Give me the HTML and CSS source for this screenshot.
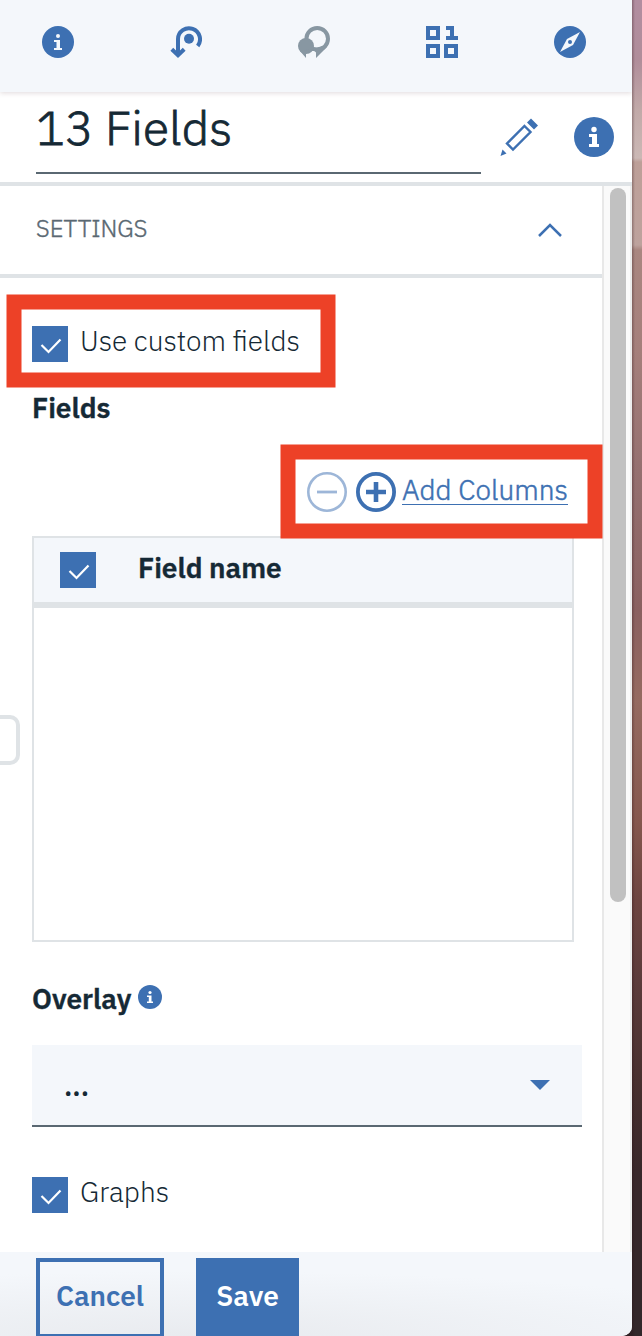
FILE: index.html
```
<!DOCTYPE html>
<html lang="en">
<head>
<meta charset="utf-8">
<title>13 Fields</title>
<link rel="stylesheet" href="styles.css">
</head>
<body>
<div class="desktop">
<main class="panel">
  <nav class="toolbar">
    <svg class="tool" viewBox="0 0 32 32"><circle cx="16" cy="16" r="16"/><circle class="paper" cx="16" cy="10" r="2"/><path class="paper" d="M12 14h6v8h2v2h-8v-2h2.500v-6H12z"/></svg>
    <svg class="tool" viewBox="0 0 32 32"><path class="stroke" d="M8 28V13a11 11 0 1 1 19.700 7" stroke-width="4"/><path class="stroke" d="M1.800 23.200L8 29.200l6.200-6" stroke-width="4"/><circle cx="19" cy="12.800" r="5"/></svg>
    <svg class="tool muted" viewBox="0 0 32 32"><path class="ring" d="M19.200 2a10.800 10.800 0 1 1 0 21.600 10.800 10.800 0 0 1 0-21.600z"/><circle cx="8" cy="20" r="8"/><path d="M2 25l6 7v-4.200l3.500-2.800h5l1.500 1.500V32l11-11-5-1-9 3z"/></svg>
    <svg class="tool" viewBox="0 0 32 32"><path fill-rule="evenodd" d="M0 0h14v14H0zM4 4v6h6V4zM0 18h14v14H0zM4 22v6h6v-6zM18 18h14v14H18zM22 22v6h6v-6zM20 0h8v10h4v4H20v-4h4V4h-4z"/></svg>
    <svg class="tool" viewBox="0 0 32 32"><circle cx="16" cy="16" r="16"/><path class="paper" d="M26 6l-7 13-13 7 7-13z"/><circle cx="16" cy="16" r="2"/></svg>
  </nav>
  <header class="heading">
    <h1 class="title">13 Fields</h1>
    <svg class="pencil" viewBox="0 0 38 38"><path class="stroke" d="M24.500 8l6 6-17.500 17.500-6-6z" stroke-width="2.400"/><path d="M31 .5l7 7-4 4-7-7zM2.500 31.500l4 4L.5 38z"/></svg>
    <svg class="title-info" viewBox="0 0 40 40"><circle cx="20" cy="20" r="20"/><circle class="paper" cx="20" cy="12.500" r="2.700"/><path class="paper" d="M15 17h8v10h2v3H15v-3h3v-7h-3z"/></svg>
  </header>
  <div class="body">
    <div class="content">
      <div class="section-head">
        <span class="section-name">SETTINGS</span>
        <svg class="chevron" viewBox="0 0 24 14"><path class="stroke" d="M1 13L12 2l11 11" stroke-width="2.500"/></svg>
      </div>
      <div class="settings">
        <label class="option custom"><svg class="check" viewBox="0 0 36 36"><path d="M9.500 19l7 7L28.500 13.500"/></svg><span class="use-label">Use custom fields</span></label>
        <h2 class="label fields-label">Fields</h2>
        <div class="actions">
          <svg class="round faded" viewBox="0 0 40 40"><circle class="stroke" cx="20" cy="20" r="18.700" stroke-width="2.600"/><path d="M10 18.600h20v2.800H10z"/></svg>
          <svg class="round plus" viewBox="0 0 40 40"><circle class="stroke" cx="20" cy="20" r="18.100" stroke-width="3.800"/><path d="M10 17.700h7.700V10h4.600v7.700H30v4.600h-7.700V30h-4.600v-7.700H10z"/></svg>
          <a class="add">Add Columns</a>
        </div>
        <div class="table">
          <div class="table-head"><svg class="check" viewBox="0 0 36 36"><path d="M9.500 19l7 7L28.500 13.500"/></svg><span class="label column-name">Field name</span></div>
        </div>
        <div class="overlay-row"><h2 class="label overlay-label">Overlay</h2><svg class="small-info" viewBox="0 0 24 24"><circle cx="12" cy="12" r="12"/><circle class="paper" cx="12" cy="7.500" r="1.600"/><path class="paper" d="M9 10.500h4.500v6H15V18H9v-1.500h1.800V12H9z"/></svg></div>
        <div class="select"><span class="dots">...</span><svg class="caret" viewBox="0 0 20 10"><path d="M0 0h20L10 10z"/></svg></div>
        <label class="option graphs"><svg class="check" viewBox="0 0 36 36"><path d="M9.500 19l7 7L28.500 13.500"/></svg><span class="graphs-label">Graphs</span></label>
      </div>
    </div>
    <div class="track"><div class="thumb"></div></div>
  </div>
  <footer class="footer">
    <button class="button cancel">Cancel</button>
    <button class="button save">Save</button>
  </footer>
  <div class="handle"></div>
  <div class="mark mark-custom"></div>
  <div class="mark mark-add"></div>
</main>
</div>
</body>
</html>
```
FILE: styles.css
```
* { box-sizing: border-box; }
body { margin: 0; font-family: "IBM Plex Sans", Roboto, sans-serif; color: #152935; }
h1, h2 { margin: 0; }
svg { display: block; flex: none; fill: #3d70b2; }
.stroke { fill: none; stroke: #3d70b2; }
.paper { fill: #fff; }

.desktop {
  height: 1336px;
  overflow: hidden;
  background:
    linear-gradient(90deg, rgba(40, 15, 20, .3) 632px, transparent 635px),
    linear-gradient(#b18da0 0, #b08d9a 60px, #c1a9a8 110px, #cbb8b5 158px, #bd9f98 162px, #bda29d 245px, #a98680 250px, #a57f7b 350px, #957070 470px, #8a6060 610px, #956a60 700px, #85574e 820px, #6d4440 900px, #5c3b3b 980px, #48302f 1080px, #38272a 1170px, #32272a 1336px);
}
.panel {
  position: relative;
  display: flex;
  flex-direction: column;
  width: 632px;
  height: 1336px;
  overflow: hidden;
  background: #fff;
  border-bottom-right-radius: 10px;
}
.toolbar {
  position: relative;
  display: flex;
  justify-content: space-between;
  height: 92px;
  flex: none;
  padding: 26px 46px 0 42px;
  background: #f4f7fb;
  box-shadow: 0 1px 5px rgba(70, 30, 40, .17);
}
.tool { width: 32px; height: 32px; }
.toolbar .paper { fill: #f4f7fb; }
.muted { fill: #8897a2; }
.ring { fill: none; stroke: #8897a2; stroke-width: 4; }
.heading {
  display: flex;
  height: 94px;
  flex: none;
  padding-left: 36px;
  border-bottom: 4px solid #dfe3e6;
}
.title {
  width: 445px;
  height: 82px;
  border-bottom: 2px solid #5a6872;
  font-size: 48px;
  font-weight: 300;
  line-height: 71px;
  -webkit-text-stroke: .8px #152935;
}
.pencil { width: 38px; height: 38px; margin: 26px 0 0 19px; }
.title-info { width: 40px; height: 40px; margin: 25px 0 0 36px; }

.body { display: flex; height: 1066px; flex: none; }
.content { width: 602px; }
.section-head {
  display: flex;
  justify-content: space-between;
  height: 92px;
  padding: 0 40px 0 36px;
  border-bottom: 4px solid #dfe3e6;
}
.section-name {
  color: #5a6872;
  font-size: 24px;
  font-weight: 300;
  line-height: 84px;
  -webkit-text-stroke: .4px #5a6872;
}
.chevron { width: 24px; height: 14px; margin-top: 36.5px; }
.settings { display: flex; flex-direction: column; padding: 48px 20px 0 32px; font-size: 28px; }
.option { display: flex; height: 36px; gap: 12px; font-weight: 300; line-height: 29px; white-space: nowrap; }
.check { width: 36px; height: 36px; background: #3d70b2; }
.check path { fill: none; stroke: #fff; stroke-width: 2.2; }
.label { font-size: 28px; font-weight: 600; line-height: 36px; white-space: nowrap; -webkit-text-stroke: .4px #152935; }
.fields-label { margin-top: 28px; }
.actions { display: flex; height: 40px; margin-top: 46px; padding-left: 275px; }
.round { width: 40px; height: 40px; }
.faded { opacity: .5; }
.plus { margin-left: 9px; }
.add {
  height: 33px;
  margin-left: 6px;
  border-bottom: 1px solid #3d70b2;
  color: #3d70b2;
  line-height: 35px;
  white-space: nowrap;
  font-weight: 300;
  -webkit-text-stroke: .5px #3d70b2;
}
.table { width: 542px; height: 406px; margin-top: 24px; border: 2px solid #dfe3e6; }
.table-head {
  display: flex;
  height: 70px;
  padding: 14px 0 0 26px;
  gap: 42px;
  background: #f4f7fb;
  border-bottom: 6px solid #dfe3e6;
}
.column-name { line-height: 32px; }
.overlay-row { display: flex; height: 36px; margin-top: 39px; gap: 7px; }
.small-info { width: 24px; height: 24px; margin-top: 4px; }
.select {
  display: flex;
  justify-content: space-between;
  height: 82px;
  margin-top: 28px;
  padding: 0 32px;
  background: #f4f7fb;
  border-bottom: 2px solid #5a6872;
}
.dots { line-height: 82px; font-weight: 600; }
.caret { width: 20px; height: 10px; margin-top: 35px; }
.graphs { margin-top: 50px; }
.track {
  width: 30px;
  padding: 2px 0 0 6px;
  background: #fafafa;
  border-left: 2px solid #e8e8e8;
  border-right: 2px solid #ededed;
}
.thumb { width: 16px; height: 714px; border-radius: 8px; background: #c1c1c1; }
.footer {
  display: flex;
  height: 84px;
  flex: none;
  gap: 32px;
  padding: 6px 36px 0;
  background: radial-gradient(ellipse 620px 65px at 200px 100%, rgba(225, 227, 231, .6), rgba(225, 227, 231, 0)), #f4f7fb;
}
.button {
  height: 80px;
  padding: 0 0 4px;
  border: 4px solid #3d70b2;
  font: 600 28px/64px "IBM Plex Sans", Roboto, sans-serif;
  flex: none;
}
.cancel { width: 128px; color: #3d70b2; background: transparent; }
.save { width: 103px; color: #fff; background: #3d70b2; }

.handle {
  position: absolute;
  left: -20px;
  top: 715px;
  width: 40px;
  height: 50px;
  border: 4px solid #dfe3e6;
  border-radius: 10px;
  background: #fff;
}
.mark { position: absolute; border: 15px solid #ed4127; transform: translate(-.5px, -.5px); }
.mark-custom { left: 7px; top: 295px; width: 329px; height: 93px; }
.mark-add { left: 281px; top: 445px; width: 322px; height: 94px; }
```
